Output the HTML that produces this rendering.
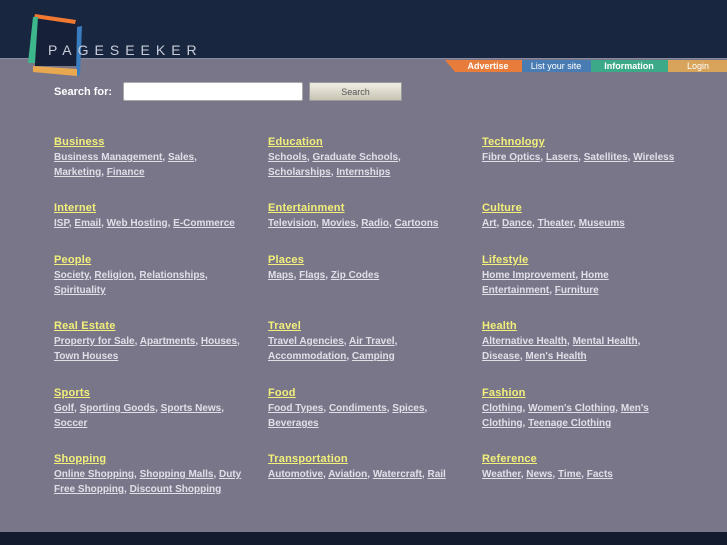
<!DOCTYPE html>
<html><head><meta charset="utf-8"><style>
*{margin:0;padding:0;box-sizing:border-box}
body{width:727px;height:545px;background:#7a7689;position:relative;overflow:hidden;font-family:"Liberation Sans",sans-serif}
.hdr{position:absolute;left:0;top:0;width:727px;height:59px;background:#19263f;border-bottom:1px solid #8a8aa0}
.foot{position:absolute;left:0;top:532px;width:727px;height:13px;background:#121c2e}
.logo{position:absolute;left:48px;top:42px;color:#c8ccd8;font-size:14px;letter-spacing:6px}
.sf{position:absolute;left:54px;top:86px;color:#fff;font-weight:bold;font-size:11px}
.inp{position:absolute;left:123px;top:82px;width:180px;height:19px;background:#fff;border:1px solid #aaa;border-radius:2px}
.btn{position:absolute;left:309px;top:82px;width:93px;height:19px;background:linear-gradient(#f0eee4,#c8c4b4);border:1px solid #999;font-size:9px;color:#555;text-align:center;line-height:18px}
.c{position:absolute;font-size:10px;font-weight:bold;line-height:15px;white-space:nowrap;letter-spacing:0}
.c b{display:block;color:#f2f07a;text-decoration:underline;font-size:11px;letter-spacing:0.2px}
.c span{color:#e0dfe8}
.c u{color:#e0dfe8}
</style></head><body>
<div class="hdr"></div>
<svg style="position:absolute;left:0;top:0" width="100" height="80">
<polygon points="35,15 77,21 77,66 35,66" fill="#162038"/>
<polygon points="35,14 76,20 75,24 34,18" fill="#f07830"/>
<polygon points="77,27 82,26 80,76 76,75" fill="#3a7cc0"/>
<polygon points="33,17 38,17 35,63 28,63" fill="#3cb88c"/>
<polygon points="33,66 77,69 77,76 33,72" fill="#e8a850"/>
</svg>
<div class="logo">PAGESEEKER</div>
<svg style="position:absolute;left:445px;top:60px" width="282" height="12">
<polygon points="0,0 77,0 77,12 10,12" fill="#e87c3a"/>
<rect x="77" y="0" width="69" height="12" fill="#4a7cb4"/>
<rect x="146" y="0" width="77" height="12" fill="#3caa88"/>
<rect x="223" y="0" width="59" height="12" fill="#d8a45c"/>
<g font-family="Liberation Sans" font-size="9" fill="#fff" text-anchor="middle">
<text x="43" y="9" font-weight="bold">Advertise</text>
<text x="111" y="9">List your site</text>
<text x="184" y="9" font-weight="bold">Information</text>
<text x="253" y="9">Login</text></g>
</svg>
<div class="sf">Search for:</div>
<div class="inp"></div>
<div class="btn">Search</div>

<div class="c" style="left:54px;top:135px"><b>Business</b><u>Business Management</u><span>, </span><u>Sales</u><span>,</span><br><u>Marketing</u><span>, </span><u>Finance</u></div>
<div class="c" style="left:268px;top:135px"><b>Education</b><u>Schools</u><span>, </span><u>Graduate Schools</u><span>,</span><br><u>Scholarships</u><span>, </span><u>Internships</u></div>
<div class="c" style="left:482px;top:135px"><b>Technology</b><u>Fibre Optics</u><span>, </span><u>Lasers</u><span>, </span><u>Satellites</u><span>, </span><u>Wireless</u></div>

<div class="c" style="left:54px;top:201px"><b>Internet</b><u>ISP</u><span>, </span><u>Email</u><span>, </span><u>Web Hosting</u><span>, </span><u>E-Commerce</u></div>
<div class="c" style="left:268px;top:201px"><b>Entertainment</b><u>Television</u><span>, </span><u>Movies</u><span>, </span><u>Radio</u><span>, </span><u>Cartoons</u></div>
<div class="c" style="left:482px;top:201px"><b>Culture</b><u>Art</u><span>, </span><u>Dance</u><span>, </span><u>Theater</u><span>, </span><u>Museums</u></div>

<div class="c" style="left:54px;top:253px"><b>People</b><u>Society</u><span>, </span><u>Religion</u><span>, </span><u>Relationships</u><span>,</span><br><u>Spirituality</u></div>
<div class="c" style="left:268px;top:253px"><b>Places</b><u>Maps</u><span>, </span><u>Flags</u><span>, </span><u>Zip Codes</u></div>
<div class="c" style="left:482px;top:253px"><b>Lifestyle</b><u>Home Improvement</u><span>, </span><u>Home</u><br><u>Entertainment</u><span>, </span><u>Furniture</u></div>

<div class="c" style="left:54px;top:319px"><b>Real Estate</b><u>Property for Sale</u><span>, </span><u>Apartments</u><span>, </span><u>Houses</u><span>,</span><br><u>Town Houses</u></div>
<div class="c" style="left:268px;top:319px"><b>Travel</b><u>Travel Agencies</u><span>, </span><u>Air Travel</u><span>,</span><br><u>Accommodation</u><span>, </span><u>Camping</u></div>
<div class="c" style="left:482px;top:319px"><b>Health</b><u>Alternative Health</u><span>, </span><u>Mental Health</u><span>,</span><br><u>Disease</u><span>, </span><u>Men's Health</u></div>

<div class="c" style="left:54px;top:386px"><b>Sports</b><u>Golf</u><span>, </span><u>Sporting Goods</u><span>, </span><u>Sports News</u><span>,</span><br><u>Soccer</u></div>
<div class="c" style="left:268px;top:386px"><b>Food</b><u>Food Types</u><span>, </span><u>Condiments</u><span>, </span><u>Spices</u><span>,</span><br><u>Beverages</u></div>
<div class="c" style="left:482px;top:386px"><b>Fashion</b><u>Clothing</u><span>, </span><u>Women's Clothing</u><span>, </span><u>Men's</u><br><u>Clothing</u><span>, </span><u>Teenage Clothing</u></div>

<div class="c" style="left:54px;top:452px"><b>Shopping</b><u>Online Shopping</u><span>, </span><u>Shopping Malls</u><span>, </span><u>Duty</u><br><u>Free Shopping</u><span>, </span><u>Discount Shopping</u></div>
<div class="c" style="left:268px;top:452px"><b>Transportation</b><u>Automotive</u><span>, </span><u>Aviation</u><span>, </span><u>Watercraft</u><span>, </span><u>Rail</u></div>
<div class="c" style="left:482px;top:452px"><b>Reference</b><u>Weather</u><span>, </span><u>News</u><span>, </span><u>Time</u><span>, </span><u>Facts</u></div>

<div class="foot"></div>
</body></html>
